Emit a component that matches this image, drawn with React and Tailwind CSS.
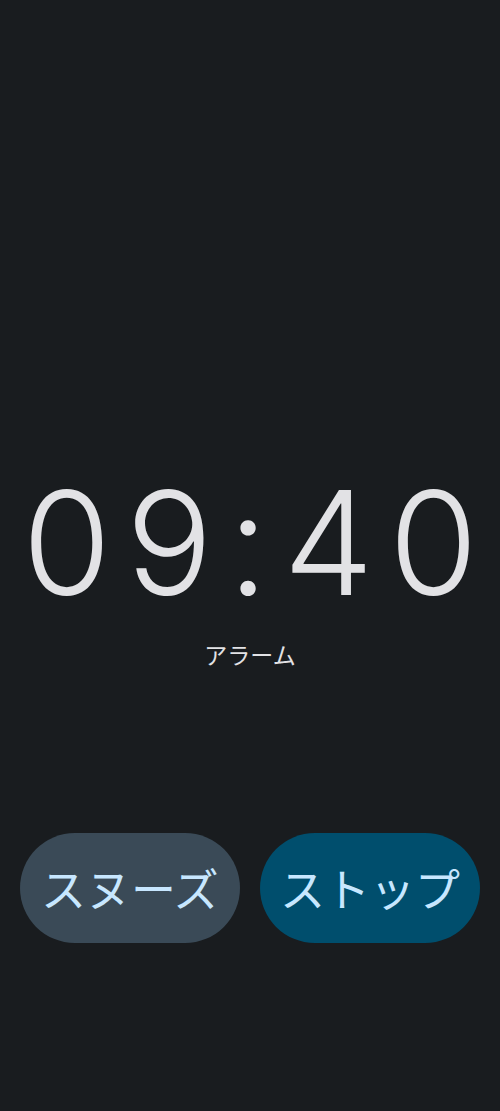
import React from "react";

const App = () => {
  return (
    <div className="w-[500px] h-[1111px] bg-[#191c1f] flex flex-col items-center overflow-hidden">
      {/* Clock */}
      <div className="mt-[458px] flex flex-col items-center">
        <div
          className="text-[144px] leading-[170px] font-light text-[#e2e2e5] tracking-[15px] pl-[15px]"
          style={{ fontFamily: "Inter, 'Noto Sans', sans-serif" }}
        >
          09:40
        </div>
        <div
          className="mt-[10px] text-[23px] leading-[32px] text-[#e2e2e5]"
          style={{ fontFamily: "'Noto Sans CJK JP', sans-serif" }}
        >
          アラーム
        </div>
      </div>

      {/* Buttons */}
      <div
        className="mt-auto mb-[168px] w-full px-[20px] flex gap-[20px]"
        style={{ fontFamily: "'Noto Sans CJK JP', sans-serif" }}
      >
        <button className="flex-1 h-[110px] rounded-full bg-[#3a4a57] text-[#c7e7ff] text-[45px]">
          スヌーズ
        </button>
        <button className="flex-1 h-[110px] rounded-full bg-[#004e6d] text-[#c7e7ff] text-[45px]">
          ストップ
        </button>
      </div>
    </div>
  );
};

export default App;
